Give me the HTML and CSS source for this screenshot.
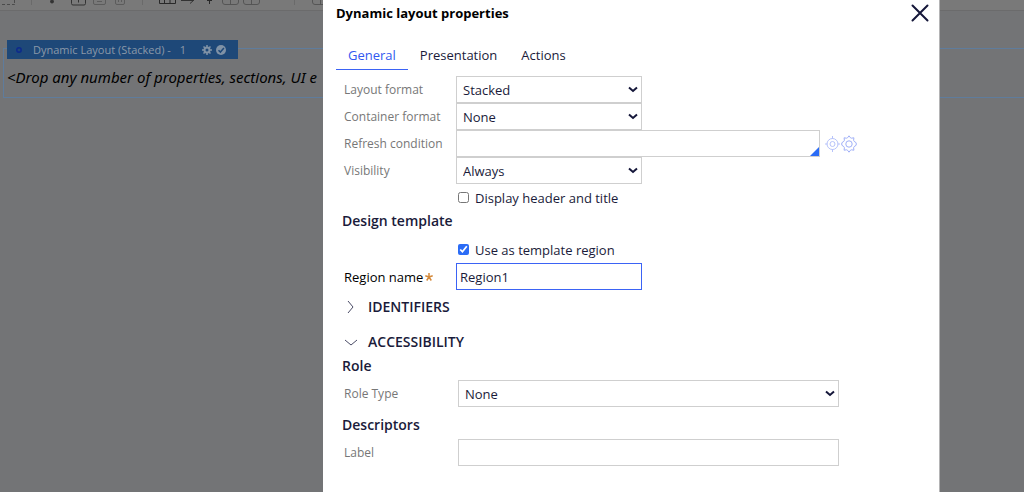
FILE: index.html
```html
<!DOCTYPE html>
<html lang="en">
<head>
<meta charset="utf-8">
<title>Dynamic layout properties</title>
<link rel="stylesheet" href="styles.css">
</head>
<body>
<div class="workspace">
  <div class="toolbar" aria-hidden="true">
    <svg class="toolbar-icons" width="324" height="10" viewBox="0 0 324 10" fill="none" stroke="#4b4b4b" stroke-width="1">
      <path d="M2 4.500h3M7 4.500h3M12 4.500h2.500V0" stroke-dasharray="3 1"/>
      <path d="M31.500 0v5M142.500 0v5M294.500 0v5" stroke="#6a6a6a"/>
      <circle cx="52" cy="1.500" r="1.500" fill="#333" stroke="#333"/>
      <path d="M71.500 0v3.500q0 1.500 1.500 1.500h11q1.500 0 1.500-1.500V0M78.500 0v2.500" stroke="#333"/>
      <path d="M93.500 0v3q0 1.500 1.500 1.500h9q1.500 0 1.500-1.500V0M97 1.500h5M115.500 0v3q0 1.500 1.500 1.500h6q1.500 0 1.500-1.500V0M118.500 0v2M121.500 0v2" stroke="#5c5c5c"/>
      <path d="M159.500 0v3.500h16V0M164.500 0v3.500M170 0v3.500" stroke="#292929"/>
      <path d="M181 .500h12M190 3.500l4-3.500" stroke="#333"/>
      <path d="M209.500 0v4M207 .500h5" stroke="#292929"/>
      <path d="M222.500 0v2q0 2.500 2.500 2.500h11q2.500 0 2.500-2.500V0M230.500 0v4.500M243.500 0v2q0 2.500 2.500 2.500h11q2.500 0 2.500-2.500V0M251.500 0v4.500M312.500 0v2q0 2.500 2.500 2.500h9M320.500 0v4.500" stroke="#555"/>
    </svg>
  </div>
  <main class="canvas">
    <section class="drop-zone">
      <div class="layout-chip">
        <svg width="8" height="8" viewBox="0 0 8 8" fill="none" stroke="#0d2a8c" stroke-width="1.500"><circle cx="4" cy="4" r="2.200"/></svg>
        <span class="chip-name">Dynamic Layout (Stacked) -</span>
        <span class="chip-count">1</span>
        <svg width="10" height="10" viewBox="0 0 10 10" fill="none" stroke="#8092a6"><circle cx="5" cy="5" r="2.500" stroke-width="2"/><path d="M5 0v2M5 8v2M0 5h2M8 5h2M1.500 1.500l1.400 1.400M7.100 7.100l1.400 1.400M8.500 1.500L7.100 2.900M2.900 7.100L1.500 8.500" stroke-width="1.500"/></svg>
        <svg class="chip-check" width="10" height="10" viewBox="0 0 10 10"><circle cx="5" cy="5" r="5" fill="#8092a6"/><path d="M2.500 5.200l1.900 1.900 3.500-4" fill="none" stroke="#1e4878" stroke-width="1.500"/></svg>
      </div>
      <p class="drop-hint">&lt;Drop any number of properties, sections, UI e</p>
    </section>
  </main>
</div>

<div class="modal" role="dialog" aria-labelledby="modal-title">
  <header class="modal-header">
    <h1 class="modal-title" id="modal-title">Dynamic layout properties</h1>
    <button class="close" type="button" aria-label="Close">
      <svg width="18" height="18" viewBox="0 0 18 18" fill="none" stroke="#15173a" stroke-width="2" stroke-linecap="round"><path d="M1.500 1.500l15 15M16.500 1.500l-15 15"/></svg>
    </button>
  </header>
  <div class="tabs" role="tablist">
    <button class="tab tab-active" type="button" role="tab" aria-selected="true">General</button>
    <button class="tab" type="button" role="tab" aria-selected="false">Presentation</button>
    <button class="tab" type="button" role="tab" aria-selected="false">Actions</button>
  </div>
  <form class="form">
    <div class="row">
      <label class="label" for="layout-format">Layout format</label>
      <div class="select-box">
        <select class="field" id="layout-format"><option>Stacked</option></select>
        <svg class="arrow" width="10" height="7" viewBox="0 0 10 7"><path d="M1 1.500l4 3.500 4-3.500"/></svg>
      </div>
    </div>
    <div class="row">
      <label class="label" for="container-format">Container format</label>
      <div class="select-box">
        <select class="field" id="container-format"><option>None</option></select>
        <svg class="arrow" width="10" height="7" viewBox="0 0 10 7"><path d="M1 1.500l4 3.500 4-3.500"/></svg>
      </div>
    </div>
    <div class="row">
      <label class="label" for="refresh">Refresh condition</label>
      <div class="expression">
        <div class="expression-box">
          <input class="field" id="refresh" type="text">
          <svg class="corner" width="9" height="9" viewBox="0 0 9 9"><path d="M9 0v9H0z" fill="#2b6cf6"/></svg>
        </div>
        <button class="icon-button" type="button" aria-label="Pick value">
          <svg width="15" height="16" viewBox="0 0 15 16" fill="none" stroke="#b7c3fa"><circle cx="7.500" cy="8" r="5.500"/><circle cx="7.500" cy="8" r="2.500"/><path d="M7.500 0v3M7.500 13v3M0 8h2.500M12.500 8H15"/></svg>
        </button>
        <button class="icon-button" type="button" aria-label="Open condition builder">
          <svg width="18" height="18" viewBox="0 0 18 18" fill="none" stroke="#a0b0f8" stroke-linejoin="round"><circle cx="9" cy="9" r="3.200"/><path d="M7.500 2.800L9 .800l1.500 2 .9.400 2.500-.4-.3 2.500.5 1 2.100 1.500v2.400l-2.100 1.500-.5 1 .3 2.500-2.500-.4-.9.400-1.500 2-1.500-2-.9-.4-2.500.4.300-2.500-.5-1L1.800 10.200V7.800l2.100-1.500.5-1-.3-2.500 2.500.4z"/></svg>
        </button>
      </div>
    </div>
    <div class="row">
      <label class="label" for="visibility">Visibility</label>
      <div class="select-box">
        <select class="field" id="visibility"><option>Always</option></select>
        <svg class="arrow" width="10" height="7" viewBox="0 0 10 7"><path d="M1 1.500l4 3.500 4-3.500"/></svg>
      </div>
    </div>
    <div class="row">
      <label class="check"><input class="check-input" type="checkbox">Display header and title</label>
    </div>

    <h2 class="heading heading-template">Design template</h2>
    <div class="row">
      <label class="check"><input class="check-input" type="checkbox" checked>Use as template region</label>
    </div>
    <div class="row">
      <label class="label label-required" for="region">Region name<svg class="star" width="8" height="8" viewBox="0 0 8 8" fill="none" stroke="#d48a3c" stroke-width="1.500"><path d="M4 4V0M4 4L.300 2.800M4 4l3.700-1.200M4 4L1.700 7.500M4 4l2.300 3.500"/></svg></label>
      <input class="field field-focus" id="region" type="text" value="Region1">
    </div>

    <button class="disclosure" type="button" aria-expanded="false">
      <svg width="14" height="14" viewBox="0 0 14 14"><path d="M4 1l5 6-5 6"/></svg>IDENTIFIERS
    </button>
    <button class="disclosure disclosure-open" type="button" aria-expanded="true">
      <svg width="14" height="14" viewBox="0 0 14 14"><path d="M1 5l6 5 6-5"/></svg>ACCESSIBILITY
    </button>

    <h2 class="heading">Role</h2>
    <div class="row row-wide">
      <label class="label" for="role-type">Role Type</label>
      <div class="select-box">
        <select class="field" id="role-type"><option>None</option></select>
        <svg class="arrow" width="10" height="7" viewBox="0 0 10 7"><path d="M1 1.500l4 3.500 4-3.500"/></svg>
      </div>
    </div>
    <h2 class="heading">Descriptors</h2>
    <div class="row row-wide">
      <label class="label" for="label-text">Label</label>
      <input class="field" id="label-text" type="text">
    </div>
  </form>
</div>
</body>
</html>
```
FILE: styles.css
```css
* {
  box-sizing: border-box;
}

body {
  margin: 0;
  min-height: 100vh;
  background: #737476;
  color: #1a1b3a;
  font-family: "Open Sans", "Noto Sans", sans-serif;
  font-size: 13px;
  line-height: 20px;
  overflow: hidden;
}

h1,
h2,
p {
  margin: 0;
}

button {
  padding: 0;
  border: 0;
  background: none;
  color: inherit;
  font: inherit;
}

svg {
  display: block;
  flex: none;
}

/* Dimmed editor behind the dialog */
.toolbar {
  height: 11px;
  background: #797979;
  border-bottom: 1px solid #6b6b6c;
}

.canvas {
  padding: 37px 0 0 3px;
}

.drop-zone {
  height: 50px;
  padding-left: 3px;
  border: 1px solid #5f7c9c;
  border-right: 0;
  white-space: nowrap;
}

.layout-chip {
  display: flex;
  align-items: center;
  width: 231px;
  height: 19px;
  margin-top: -9px;
  padding-left: 8px;
  background: #1e4878;
  color: #8b98a8;
  font-size: 11px;
}

.chip-name {
  margin-left: 10px;
}

.chip-count {
  margin: 0 16px 0 9px;
}

.chip-check {
  margin-left: 4px;
}

.drop-hint {
  width: 316px;
  margin-top: 8px;
  overflow: hidden;
  color: #000;
  font-family: "Noto Sans", "Open Sans", sans-serif;
  font-size: 15px;
  font-style: italic;
}

/* Dialog */
.modal {
  position: absolute;
  inset: 0 84px 0 323px;
  padding: 0 10px 0 13px;
  border: solid #b4b4b5;
  border-width: 0 1px 0 0;
  background: #fff;
}

.modal-header {
  display: flex;
  align-items: center;
  justify-content: space-between;
  height: 26px;
}

.modal-title {
  color: #000;
  font-size: 13px;
  font-weight: 700;
}

.tabs {
  display: flex;
  margin-top: 14px;
}

.tab {
  height: 30px;
  padding: 0 12px;
  border-bottom: 1px solid transparent;
}

.tab-active {
  border-color: #3b63f5;
  color: #3157f0;
}

.form {
  margin: 6px 0 0 6px;
}

.row {
  display: grid;
  grid-template-columns: 112px 186px 1fr;
  align-items: center;
  min-height: 27px;
  padding-left: 2px;
}

.row-wide {
  grid-template-columns: 114px 381px;
}

.label {
  color: #777;
  font-size: 12px;
}

.label-required {
  display: flex;
  align-items: center;
  gap: 2px;
  color: #000;
  font-size: 13px;
}

.field {
  display: block;
  width: 100%;
  height: 27px;
  margin: 0;
  padding: 0 3px;
  border: 1px solid #cfcfcf;
  border-radius: 0;
  outline: 0;
  background: #fff;
  color: #1a1b3a;
  font: inherit;
}

.field-focus {
  border-color: #3b63f5;
}

.select-box,
.expression-box {
  position: relative;
}

.select-box .field {
  padding: 0 20px 0 6px;
  appearance: none;
}

.arrow {
  position: absolute;
  top: 10px;
  right: 4px;
  fill: none;
  stroke: #15173a;
  stroke-width: 2;
  pointer-events: none;
}

.expression {
  display: flex;
  grid-column: 2 / -1;
  align-items: center;
}

.expression-box {
  width: 364px;
  margin-right: 5px;
}

.corner {
  position: absolute;
  right: 1px;
  bottom: 1px;
}

.check {
  display: flex;
  grid-column: 2 / -1;
  align-items: center;
  gap: 6px;
  padding-left: 2px;
}

.check-input {
  width: 11px;
  height: 11px;
  margin: 0;
  accent-color: #2b6cf6;
}

.heading {
  margin: 2px 0 4px;
  font-size: 14px;
  font-weight: 600;
}

.row + .heading {
  margin-top: 8px;
}

.row + .heading-template {
  margin: 0 0 5px;
}

.disclosure {
  display: flex;
  align-items: center;
  gap: 10px;
  height: 24px;
  margin-top: 5px;
  padding-left: 2px;
  font-size: 14px;
  font-weight: 600;
}

.disclosure-open {
  margin-top: 11px;
}

.disclosure path {
  fill: none;
  stroke: #4a4b66;
}
```
